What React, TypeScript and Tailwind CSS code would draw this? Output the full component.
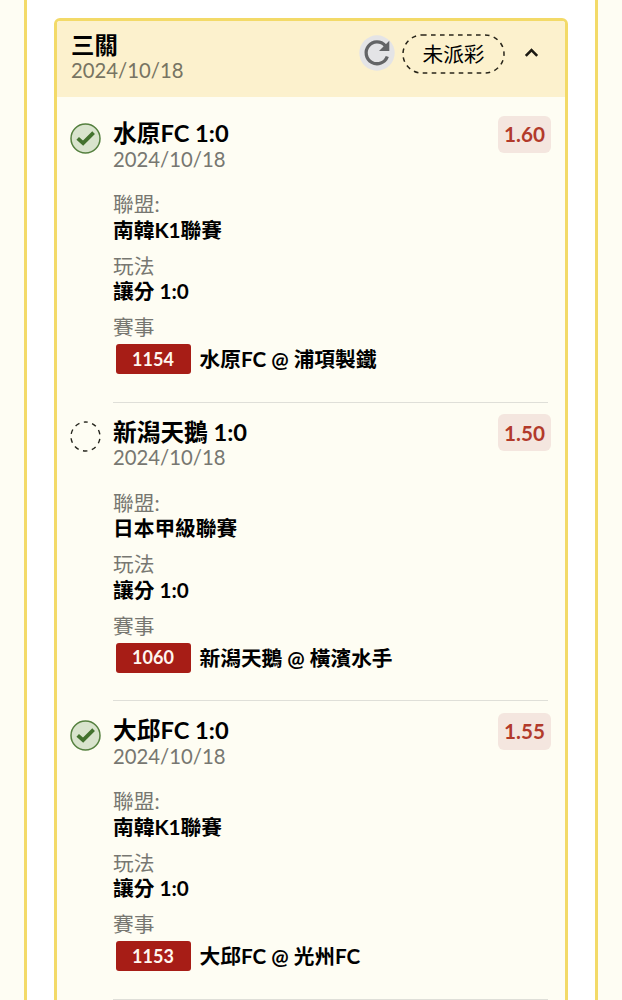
import React from "react";

type Pick = {
  team: string;
  settled: boolean;
  odds: string;
  league: string;
  play: string;
  code: string;
  match: string;
};

const picks: Pick[] = [
  { team: "水原FC 1:0", settled: true, odds: "1.60", league: "南韓K1聯賽", play: "讓分 1:0", code: "1154", match: "水原FC @ 浦項製鐵" },
  { team: "新潟天鵝 1:0", settled: false, odds: "1.50", league: "日本甲級聯賽", play: "讓分 1:0", code: "1060", match: "新潟天鵝 @ 橫濱水手" },
  { team: "大邱FC 1:0", settled: true, odds: "1.55", league: "南韓K1聯賽", play: "讓分 1:0", code: "1153", match: "大邱FC @ 光州FC" },
];

function StatusIcon({ settled }: { settled: boolean }) {
  if (!settled) {
    return (
      <svg className="size-[31px] shrink-0" viewBox="0 0 31 31" fill="none">
        <circle cx="15.5" cy="15.5" r="14.5" stroke="#24241c" strokeWidth="1.4" strokeDasharray="4.6 4.51" strokeDashoffset="2.3" transform="rotate(-90 15.5 15.5)" />
      </svg>
    );
  }
  return (
    <svg className="size-[31px] shrink-0" viewBox="0 0 31 31" fill="none">
      <circle cx="15.5" cy="15.5" r="14.5" fill="#d9e4cd" stroke="#55803f" strokeWidth="1.5" />
      <path d="M7.7 15.4 L13.1 20.2 L23.6 9.6" stroke="#43722e" strokeWidth="3.8" />
    </svg>
  );
}

function RefreshIcon() {
  return (
    <svg className="size-9 shrink-0" viewBox="0 0 36 36" fill="none">
      <circle cx="18" cy="18" r="17.7" fill="#e4e4e6" />
      <path d="M28.3 21.5 A10.9 10.9 0 1 1 26.2 10.6" stroke="#636466" strokeWidth="3.3" />
      <path d="M30.3 5.8 V16.1 H20 Z" fill="#636466" />
    </svg>
  );
}

function Field({ label, value }: { label: string; value: string }) {
  return (
    <div className="h-[61.5px] leading-[25.5px]">
      <div className="text-[#777771]">{label}</div>
      <div className="font-bold">{value}</div>
    </div>
  );
}

function PickRow({ pick }: { pick: Pick }) {
  return (
    <section className="flex h-[298.5px] pl-[13px] pr-[14px]">
      <div className="w-[43px] shrink-0 pt-[18.5px]">
        <StatusIcon settled={pick.settled} />
      </div>
      <div className="mr-[3px] flex-1 border-b-[1.5px] border-[#dfdfd8]">
        <div className="flex h-[88px] justify-between pt-[17px]">
          <div>
            <h2 className="text-[23.7px] font-bold leading-[25.5px]">{pick.team}</h2>
            <div className="text-[20.3px] leading-[25.5px] text-[#777771]">2024/10/18</div>
          </div>
          <div className="-mr-[3px] -mt-[5.5px] flex h-[37px] w-[53px] items-center justify-center rounded-[6px] bg-[#f4e6df] pt-0.5 font-bold text-[#b23a2b]">
            {pick.odds}
          </div>
        </div>
        <Field label="聯盟:" value={pick.league} />
        <Field label="玩法" value={pick.play} />
        <div className="leading-[25.5px] text-[#777771]">賽事</div>
        <div className="ml-[2.5px] mt-[3.5px] flex h-[30px] items-center font-bold">
          <span className="flex h-[30px] w-[75px] items-center justify-center rounded-[3px] bg-[#a71d16] text-[18px] text-[#fff6ef]">
            {pick.code}
          </span>
          <span className="ml-[9px] pt-0.5">{pick.match}</span>
        </div>
      </div>
    </section>
  );
}

export default function App() {
  return (
    <div className="h-[1000px] w-[622px] overflow-hidden whitespace-nowrap bg-[#fefdf3] px-6 font-['Lato','Noto_Sans_CJK_TC',sans-serif] text-[20.7px] text-black">
      <main className="h-full border-x-[3px] border-[#f3da68] bg-white px-[27px] pt-[18px]">
        <article className="h-[1100px] w-[514px] overflow-hidden rounded-[6px] border-[3px] border-[#f3da68] bg-[#fefdf3]">
          <header className="flex h-[76px] bg-[#fcf1cd] pl-[14px]">
            <div className="w-[288px] pt-[11.5px]">
              <h1 className="text-[23.4px] font-bold leading-[25.5px]">三關</h1>
              <div className="text-[20.3px] leading-[25px] text-[#777463]">2024/10/18</div>
            </div>
            <div className="mt-[14px]">
              <RefreshIcon />
            </div>
            <div className="relative ml-[7px] mt-[13px] flex h-[40px] w-[103px] items-center justify-center">
              <svg className="absolute inset-0 size-full" viewBox="0 0 103 40" fill="none">
                <rect x="1" y="1" width="101" height="38" rx="19" stroke="#28251a" strokeWidth="1.5" strokeDasharray="4.6 4.4" />
              </svg>
              <span className="pt-0.5">未派彩</span>
            </div>
            <svg className="ml-[19px] mt-[26px] h-[11px] w-[15px]" viewBox="0 0 15 11" fill="none">
              <path d="M1.8 8.8 L7.5 3 L13.2 8.8" stroke="#1c1a12" strokeWidth="2.6" />
            </svg>
          </header>
          <div className="pt-[7px]">
            {picks.map((pick) => (
              <PickRow key={pick.code} pick={pick} />
            ))}
          </div>
        </article>
      </main>
    </div>
  );
}
